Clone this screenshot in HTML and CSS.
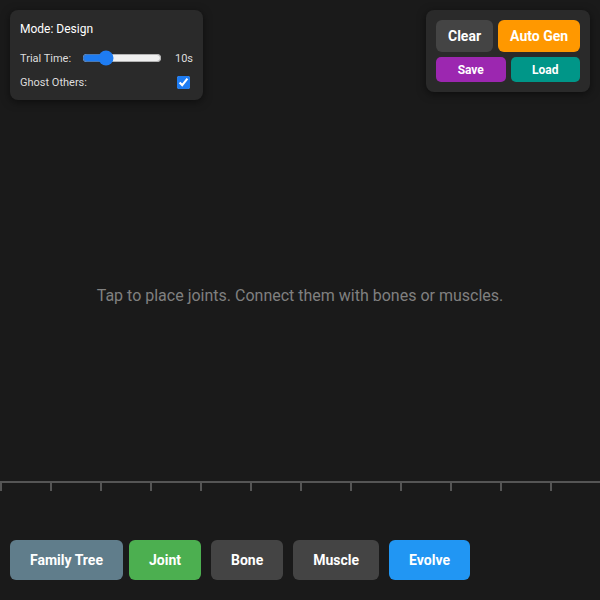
FILE: index.html
```html
<!DOCTYPE html>
<html>
<head>
<meta charset="utf-8">
<link rel="stylesheet" href="styles.css">
</head>
<body>
<div class="app">
  <div class="hud">
    <div class="panel settings">
      <div class="mode">Mode: Design</div>
      <div class="row">
        <span class="label">Trial Time:</span>
        <input class="slider" type="range" min="5" max="25" value="10">
        <span class="value">10s</span>
      </div>
      <div class="row">
        <span class="label">Ghost Others:</span>
        <input class="check" type="checkbox" checked>
      </div>
    </div>
    <div class="panel actions">
      <div class="act-row">
        <button class="btn btn-top grey">Clear</button>
        <button class="btn btn-top orange">Auto Gen</button>
      </div>
      <div class="act-row">
        <button class="btn btn-small purple">Save</button>
        <button class="btn btn-small teal">Load</button>
      </div>
    </div>
  </div>
  <div class="message">Tap to place joints. Connect them with bones or muscles.</div>
  <div class="ground"></div>
  <div class="toolbar">
    <button class="btn tool slate tree">Family Tree</button>
    <button class="btn tool green">Joint</button>
    <button class="btn tool grey">Bone</button>
    <button class="btn tool grey">Muscle</button>
    <button class="btn tool blue">Evolve</button>
  </div>
</div>
</body>
</html>
```
FILE: styles.css
```css
* { box-sizing: border-box; }
html, body {
  margin: 0;
  padding: 0;
  background: #1a1a1a;
  font-family: Roboto, "Liberation Sans", sans-serif;
  color: #fff;
}
.app {
  width: 600px;
  height: 600px;
  display: flex;
  flex-direction: column;
  overflow: hidden;
}
.hud {
  display: flex;
  justify-content: space-between;
  align-items: flex-start;
  padding: 10px 10px 0 10px;
  height: 100px;
}
.panel {
  background: #2a2a2a;
  border-radius: 8px;
  box-shadow: 0 2px 8px rgba(0, 0, 0, 0.5);
  padding: 10px;
}
.settings {
  width: 193px;
  padding: 11px 10px 8px 10px;
}
.mode {
  font-size: 12px;
  line-height: 16px;
  margin-bottom: 11px;
}
.row {
  display: flex;
  align-items: center;
  height: 20px;
  font-size: 11px;
  color: #ddd;
}
.row + .row { margin-top: 4px; }
.label { flex: 1; }
.slider {
  width: 80px;
  margin: 0 13px 0 0;
  accent-color: #1e7cf2;
}
.value { width: 18px; text-align: right; }
.check {
  margin: 0 3px 0 0;
  width: 13px;
  height: 13px;
  accent-color: #1e7cf2;
}
.actions {
  display: flex;
  flex-direction: column;
  gap: 5px;
  width: 164px;
}
.act-row {
  display: flex;
  gap: 5px;
}
.btn {
  border: none;
  color: #fff;
  font-family: Roboto, "Liberation Sans", sans-serif;
  font-weight: bold;
  white-space: nowrap;
  cursor: pointer;
}
.btn-top {
  height: 32px;
  padding: 0 12px;
  font-size: 14px;
  border-radius: 6px;
  flex: 0 0 auto;
}
.btn-top.orange { flex: 1; }
.btn-small {
  flex: 1;
  height: 25px;
  font-size: 12px;
  border-radius: 5px;
  padding: 0;
}
.grey { background: #444; }
.orange { background: #ff9800; }
.purple { background: #9c27b0; }
.teal { background: #009688; }
.slate { background: #607d8b; }
.green { background: #4caf50; }
.blue { background: #2196f3; }
.message {
  margin-top: 186px;
  text-align: center;
  font-size: 16px;
  line-height: 19px;
  color: #808080;
}
.ground {
  margin-top: 176px;
  height: 10px;
  border-top: 2px solid #555;
  background: repeating-linear-gradient(to right, #555 0 2px, transparent 2px 50px);
}
.toolbar {
  display: flex;
  gap: 10px;
  padding: 0 10px;
  margin-top: 49px;
}
.tool {
  height: 40px;
  padding: 0 20px;
  font-size: 14px;
  border-radius: 6px;
}
.tree { margin-right: -4px; }
```
